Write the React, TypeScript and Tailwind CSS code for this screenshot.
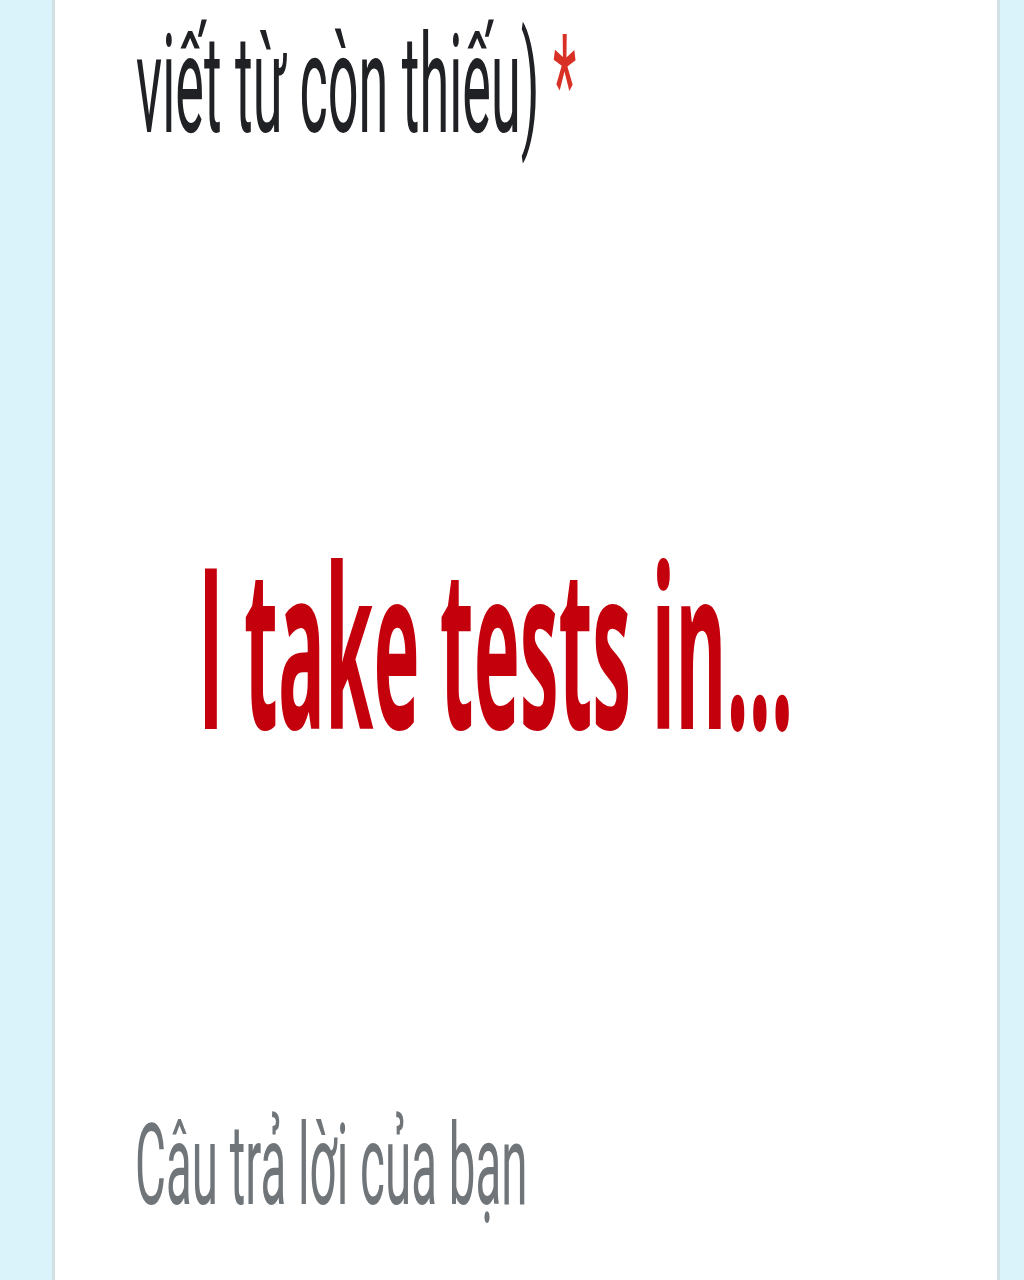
export default function App() {
  return (
    <div className="flex h-[1280px] w-full overflow-hidden bg-[#daf2f9]">
      <section className="ml-[52px] flex h-full w-[948px] flex-col border-x-[3px] border-[#d2dfe3] bg-white">
        {/* question title, second line */}
        <div className="mt-[17px] h-[138px] pl-[81px]">
          <p className="block origin-top-left scale-y-[2.56] whitespace-nowrap font-['Roboto','Liberation_Sans',sans-serif] text-[54px] leading-none text-[#202124]">
            viết từ còn thiếu) <span className="text-[#d93025]">*</span>
          </p>
        </div>

        {/* question image */}
        <div className="mt-[376px] h-[224px] pl-[143px]">
          <p className="block origin-top-left scale-y-[2.87] whitespace-nowrap font-['Open_Sans','DejaVu_Sans',sans-serif] text-[78px] font-bold leading-none text-[#c4000c]">
            I take tests in...
          </p>
        </div>

        {/* answer placeholder */}
        <div className="mt-[355px] h-[113px] pl-[80px]">
          <p className="block origin-top-left scale-y-[2.4] whitespace-nowrap font-['Roboto','Liberation_Sans',sans-serif] text-[47.5px] leading-none text-[#70757a]">
            Câu trả lời của bạn
          </p>
        </div>
      </section>
    </div>
  );
}
